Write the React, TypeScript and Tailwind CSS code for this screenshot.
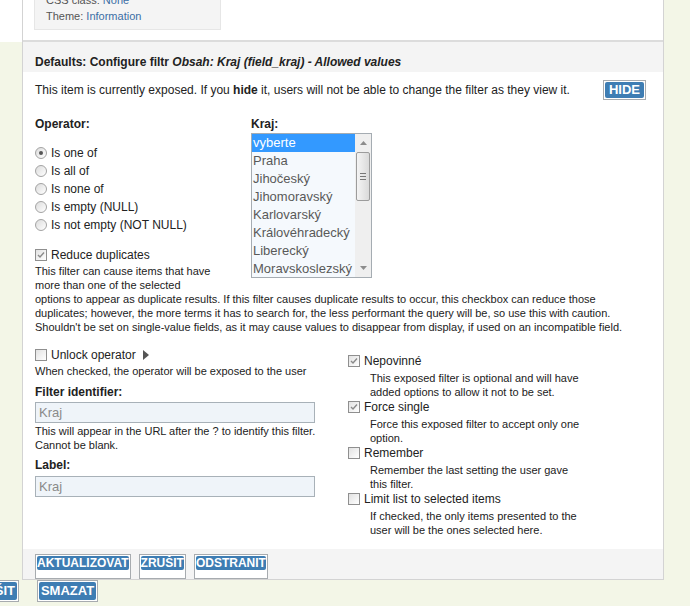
import React from 'react'

const regions = [
  'vyberte',
  'Praha',
  'Jihočeský',
  'Jihomoravský',
  'Karlovarský',
  'Královéhradecký',
  'Liberecký',
  'Moravskoslezský',
]

const operators = [
  'Is one of',
  'Is all of',
  'Is none of',
  'Is empty (NULL)',
  'Is not empty (NOT NULL)',
]

const exposeOptions = [
  {
    label: 'Nepovinné',
    checked: true,
    help: 'This exposed filter is optional and will have added options to allow it not to be set.',
  },
  {
    label: 'Force single',
    checked: true,
    help: 'Force this exposed filter to accept only one option.',
  },
  {
    label: 'Remember',
    checked: false,
    help: 'Remember the last setting the user gave this filter.',
  },
  {
    label: 'Limit list to selected items',
    checked: false,
    help: 'If checked, the only items presented to the user will be the ones selected here.',
  },
]

function Radio({ checked }: { checked?: boolean }) {
  return (
    <span className="flex h-[12px] w-[12px] shrink-0 items-center justify-center rounded-full border border-[#a3a3a3] bg-gradient-to-br from-[#dcdcdc] to-white">
      {checked && <span className="h-[4px] w-[4px] rounded-full bg-[#555]" />}
    </span>
  )
}

function Checkbox({ checked }: { checked?: boolean }) {
  return (
    <span className="flex h-[12px] w-[12px] shrink-0 items-center justify-center border border-[#8f8f8f] bg-gradient-to-br from-[#e2e2e2] to-white">
      {checked && (
        <svg width="8" height="8" viewBox="0 0 8 8">
          <path d="M1 4 L3 6 L7 1.5" fill="none" stroke="#8a8a8a" strokeWidth="1.4" />
        </svg>
      )}
    </span>
  )
}

function BlueButton({
  children,
  size = 'sm',
  className = '',
}: {
  children: React.ReactNode
  size?: 'sm' | 'md' | 'lg'
  className?: string
}) {
  const inner =
    size === 'sm'
      ? 'text-[12px] leading-[14px] px-0'
      : size === 'md'
        ? 'text-[13px] leading-[16px] px-[4px]'
        : 'text-[13px] leading-[18px] px-[2px]'
  return (
    <span className={`inline-block shrink-0 border border-[#a7abaf] bg-white p-px ${className}`}>
      <span className={`block rounded-[2px] bg-[#3e7db3] font-bold text-white ${inner}`}>
        {children}
      </span>
    </span>
  )
}

function RegionList() {
  return (
    <div className="flex h-[145px] w-[121px] border border-[#a5acb2] bg-[#f5f9fd]">
      <div className="flex-1 overflow-hidden">
        {regions.map((r, i) => (
          <div
            key={r}
            className={`h-[18px] whitespace-nowrap pl-px text-[13px] leading-[18px] ${
              i === 0 ? 'bg-[#3399ff] text-white' : 'text-[#595959]'
            }`}
          >
            {r}
          </div>
        ))}
      </div>
      <div className="flex w-[16px] flex-col bg-[#efefef]">
        <div className="flex h-[18px] items-center justify-center">
          <svg width="7" height="4" viewBox="0 0 7 4">
            <path d="M0 4 L3.5 0 L7 4 Z" fill="#8c8c8c" />
          </svg>
        </div>
        <div className="mx-px flex h-[49px] flex-col items-center justify-center gap-[2px] rounded-[2px] border border-[#9c9c9c] bg-gradient-to-r from-[#f4f4f4] to-[#dadada]">
          <span className="h-px w-[6px] bg-[#777]" />
          <span className="h-px w-[6px] bg-[#777]" />
          <span className="h-px w-[6px] bg-[#777]" />
        </div>
        <div className="flex-1" />
        <div className="flex h-[18px] items-center justify-center">
          <svg width="7" height="4" viewBox="0 0 7 4">
            <path d="M0 0 L3.5 4 L7 0 Z" fill="#8c8c8c" />
          </svg>
        </div>
      </div>
    </div>
  )
}

export default function App() {
  return (
    <div className="min-h-[606px] overflow-hidden bg-[#f3f6e7] font-['Liberation_Sans',Arial,sans-serif] text-[12px] text-[#222]">
      <div className="flex w-[664px]">
        <div className="h-[42px] w-[22px] shrink-0 bg-white" />
        <div className="w-[642px] shrink-0 border-x border-b border-[#d3d3d3] bg-white">
          {/* previous section */}
          <div className="h-[42px] border-b-2 border-[#dcdcdc] pl-[11px]">
            <div className="h-[30px] w-[187px] overflow-hidden border border-t-0 border-[#e6e6e6] bg-[#f4f4f4] pl-[11px] text-[11px] leading-[16px] text-[#555]">
              <div className="-mt-[8px]">
                CSS class: <span className="text-[#3b6ea5]">None</span>
              </div>
              <div>
                Theme: <span className="text-[#3b6ea5]">Information</span>
              </div>
            </div>
          </div>

          {/* header */}
          <div className="h-[30px] bg-[#f4f4f4] px-[12px] pt-[13px] font-bold leading-[14px]">
            Defaults: Configure filtr <em>Obsah: Kraj (field_kraj) - Allowed values</em>
          </div>

          {/* body */}
          <div className="px-[12px] pb-[12px]">
            <div className="mt-[8px] flex items-center justify-between pr-[5px]">
              <span>
                This item is currently exposed. If you <b>hide</b> it, users will not be able to
                change the filter as they view it.
              </span>
              <BlueButton size="md">HIDE</BlueButton>
            </div>

            <div className="mt-[17px] w-[615px]">
              <div className="float-right mb-[14px] ml-[38px] mr-[278px]">
                <div className="font-bold leading-[14px]">Kraj:</div>
                <div className="mt-[2px]">
                  <RegionList />
                </div>
              </div>

              <div className="font-bold leading-[14px]">Operator:</div>
              <div className="mt-[13px]">
                {operators.map((op, i) => (
                  <div key={op} className="flex h-[18px] items-center gap-[4px]">
                    <Radio checked={i === 0} />
                    <span>{op}</span>
                  </div>
                ))}
              </div>
              <div className="mt-[12px] flex h-[18px] items-center gap-[4px]">
                <Checkbox checked />
                <span>Reduce duplicates</span>
              </div>
              <p className="text-[11px] leading-[14px]">
                This filter can cause items that have more than one of the selected options to
                appear as duplicate results. If this filter causes duplicate results to occur, this
                checkbox can reduce those duplicates; however, the more terms it has to search for,
                the less performant the query will be, so use this with caution. Shouldn't be set
                on single-value fields, as it may cause values to disappear from display, if used
                on an incompatible field.
              </p>
              <div className="clear-both" />
            </div>

            <div className="mt-[12px] flex">
              <div className="w-[280px] shrink-0">
                <div className="flex h-[18px] items-center gap-[4px]">
                  <Checkbox />
                  <span>Unlock operator</span>
                  <svg width="6" height="10" viewBox="0 0 6 10" className="ml-[3px]">
                    <path d="M0 0 L6 5 L0 10 Z" fill="#555" />
                  </svg>
                </div>
                <div className="whitespace-nowrap text-[11px] leading-[14px]">
                  When checked, the operator will be exposed to the user
                </div>
                <div className="mt-[7px] font-bold leading-[14px]">Filter identifier:</div>
                <div className="mt-[3px] h-[21px] border border-[#a8b1b8] bg-[#eff4f9] pl-[3px] text-[13px] leading-[19px] text-[#8a8a8a]">
                  Kraj
                </div>
                <div className="mt-px whitespace-nowrap text-[11px] leading-[14px]">
                  This will appear in the URL after the ? to identify this filter.
                  <br />
                  Cannot be blank.
                </div>
                <div className="mt-[6px] font-bold leading-[14px]">Label:</div>
                <div className="mt-[4px] h-[21px] border border-[#a8b1b8] bg-[#eff4f9] pl-[3px] text-[13px] leading-[19px] text-[#8a8a8a]">
                  Kraj
                </div>
              </div>

              <div className="ml-[33px] pt-[7px]">
                {exposeOptions.map(o => (
                  <div key={o.label}>
                    <div className="flex h-[16px] items-center gap-[4px]">
                      <Checkbox checked={o.checked} />
                      <span>{o.label}</span>
                    </div>
                    <div className="mt-[2px] w-[236px] pl-[22px] text-[11px] leading-[14px]">
                      {o.help}
                    </div>
                  </div>
                ))}
              </div>
            </div>
          </div>

          {/* footer */}
          <div className="flex h-[30px] gap-[8px] bg-[#f4f4f4] px-[12px] pt-[5px]">
            <BlueButton>AKTUALIZOVAT</BlueButton>
            <BlueButton>ZRUŠIT</BlueButton>
            <BlueButton>ODSTRANIT</BlueButton>
          </div>
        </div>
      </div>

      <div className="flex gap-[18px]">
        <BlueButton size="lg" className="-ml-[36px]">
          ZRUŠIT
        </BlueButton>
        <BlueButton size="lg">SMAZAT</BlueButton>
      </div>
    </div>
  )
}
